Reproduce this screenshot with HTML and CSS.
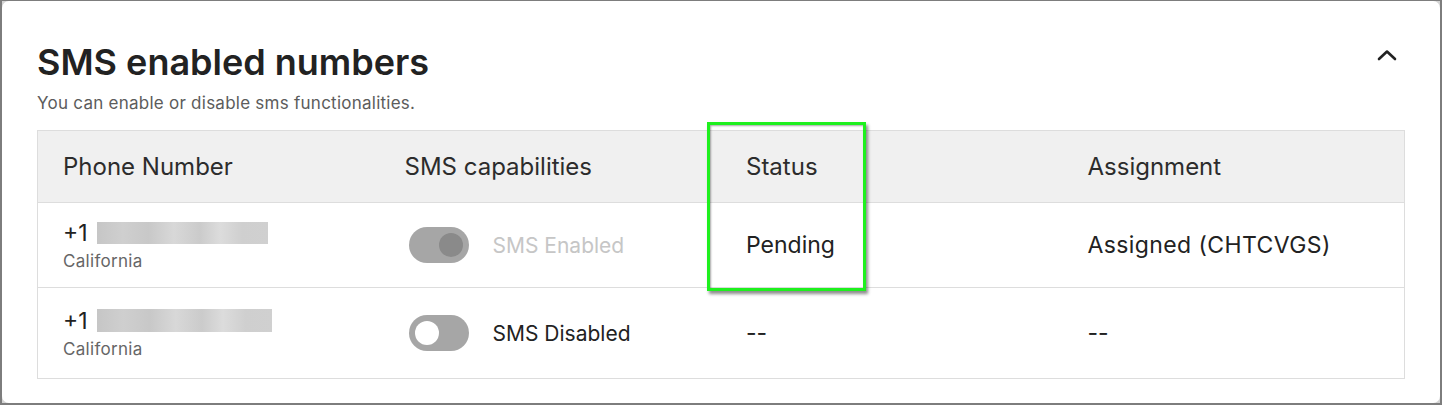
FILE: index.html
```html
<!DOCTYPE html>
<html>
<head>
<meta charset="utf-8">
<link rel="stylesheet" href="styles.css">
</head>
<body>
<div class="frame">
  <div class="card">
    <div class="head">
      <div class="head-text">
        <h1 class="title">SMS enabled numbers</h1>
        <p class="subtitle">You can enable or disable sms functionalities.</p>
      </div>
      <svg class="chevron" width="20" height="12" viewBox="0 0 20 12"><path d="M2 10 L10 2.5 L18 10" fill="none" stroke="#222" stroke-width="2.6" stroke-linecap="round" stroke-linejoin="round"/></svg>
    </div>
    <div class="table-wrap">
      <div class="table">
        <div class="row header">
          <div class="cell">Phone Number</div>
          <div class="cell">SMS capabilities</div>
          <div class="cell">Status</div>
          <div class="cell">Assignment</div>
        </div>
        <div class="row r1">
          <div class="cell phone">
            <div class="num"><span>+1</span><span class="blur b1"></span></div>
            <div class="region">California</div>
          </div>
          <div class="cell cap">
            <span class="toggle on disabled"><span class="knob"></span></span>
            <span class="cap-label muted">SMS Enabled</span>
          </div>
          <div class="cell">Pending</div>
          <div class="cell wide">Assigned (CHTCVGS)</div>
        </div>
        <div class="row r2">
          <div class="cell phone">
            <div class="num"><span>+1</span><span class="blur b2"></span></div>
            <div class="region">California</div>
          </div>
          <div class="cell cap">
            <span class="toggle off"><span class="knob"></span></span>
            <span class="cap-label">SMS Disabled</span>
          </div>
          <div class="cell">--</div>
          <div class="cell">--</div>
        </div>
      </div>
      <div class="highlight"></div>
    </div>
  </div>
</div>
</body>
</html>
```

FILE: styles.css
```css
html, body {
  margin: 0;
  padding: 0;
  background: #fff;
}
body {
  font-family: Inter, "Noto Sans", sans-serif;
  color: #222;
}
.frame {
  width: 1442px;
  height: 405px;
  box-sizing: border-box;
  border-style: solid;
  border-color: #7d7d7d;
  border-width: 1px 2px 2px 2px;
  background: #d4d4d4;
}
.card {
  height: 100%;
  background: #fff;
  border-radius: 7px;
  box-sizing: border-box;
  padding: 0 35px 0 35px;
}
.head {
  display: flex;
  justify-content: space-between;
  align-items: flex-start;
}
.title {
  margin: 0;
  padding-top: 40px;
  font-size: 36px;
  line-height: 42px;
  font-weight: 600;
  color: #222;
}
.subtitle {
  margin: 10px 0 0 0;
  font-size: 17px;
  line-height: 20px;
  letter-spacing: 0.25px;
  color: #5c5c5c;
}
.chevron {
  margin-top: 48px;
  margin-right: 8px;
}
.table-wrap {
  position: relative;
  margin-top: 17px;
}
.table {
  border: 1px solid #dddddd;
}
.row {
  display: grid;
  grid-template-columns: repeat(4, 1fr);
}
.row + .row {
  border-top: 1px solid #dddddd;
}
.cell {
  padding-left: 25px;
  display: flex;
  align-items: center;
  font-size: 23px;
  color: #222;
}
.cell.wide {
  letter-spacing: 0.4px;
}
.header {
  background: #f0f0f0;
  height: 71px;
}
.header .cell {
  font-size: 24px;
  color: #2c2c2c;
}
.r1 { height: 84px; }
.r2 { height: 90px; }
.phone {
  flex-direction: column;
  align-items: flex-start;
  justify-content: center;
}
.num {
  display: flex;
  align-items: center;
  gap: 9px;
  font-size: 23px;
  line-height: 26px;
}
.blur {
  display: inline-block;
  height: 22px;
  background: linear-gradient(90deg, #c6c6c6 0%, #cfcfcf 15%, #c8c8c8 30%, #d8d8d8 45%, #cbcbcb 60%, #dcdcdc 72%, #cfcfcf 85%, #d0d0d0 100%);
}
.b1 { width: 171px; }
.b2 { width: 175px; height: 23px; }
.region {
  margin-top: 5px;
  font-size: 17px;
  line-height: 20px;
  letter-spacing: 0.3px;
  color: #666;
}
.cap {
  gap: 24px;
}
.toggle {
  position: relative;
  display: inline-block;
  width: 60px;
  height: 36px;
  border-radius: 18px;
  background: #a6a6a6;
  margin-left: 4px;
}
.knob {
  position: absolute;
  top: 6px;
  width: 24px;
  height: 24px;
  border-radius: 50%;
}
.toggle.on .knob {
  right: 6px;
  background: #8a8a8a;
}
.toggle.off .knob {
  left: 6px;
  background: #fff;
}
.cap-label {
  font-size: 21px;
}
.cap-label.muted {
  color: #c6c6c6;
}
.highlight {
  position: absolute;
  left: 670px;
  top: -8px;
  width: 153px;
  height: 163px;
  border: 3px solid #1ef01e;
  box-shadow: 2px 3px 3px rgba(0,0,0,0.45), inset 1px 1px 2px rgba(0,0,0,0.35);
  pointer-events: none;
}
```
